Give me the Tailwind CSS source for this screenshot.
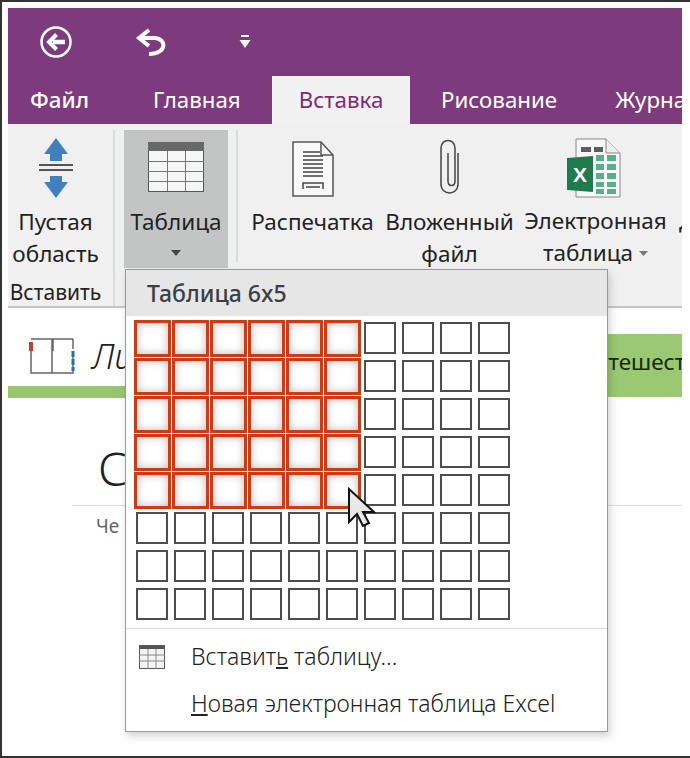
<!DOCTYPE html>
<html lang="ru">
<head>
  <meta charset="UTF-8" />
  <title>Таблица</title>
  <script src="https://cdn.jsdelivr.net/npm/@tailwindcss/browser@4"></script>
</head>
<body class="bg-white">
  <div class="relative w-[690px] h-[758px] overflow-hidden bg-white border-t-2 border-l-2 border-b-2 border-[#333] font-['Noto_Sans',sans-serif] text-[#222]">
    <div class="absolute left-[6px] top-[6px] w-[674px] h-[748px] overflow-hidden">

      <!-- title bar -->
      <div class="h-[68px] bg-[#7d3a7c] flex items-center">
        <div class="w-[96px] shrink-0 flex justify-center">
          <svg width="34" height="34" viewBox="0 0 34 34" fill="none">
            <circle cx="17" cy="17" r="14.5" stroke="#fff" stroke-width="2.5"/>
            <path d="M26 17H14" stroke="#fff" stroke-width="4.5"/>
            <path d="M17.500 9.500L10 17l7.500 7.500" stroke="#fff" stroke-width="4"/>
          </svg>
        </div>
        <div class="w-[93px] shrink-0 flex justify-center">
          <svg width="32" height="30" viewBox="0 0 32 30" fill="none">
            <path d="M14 3L4 11l10 8" stroke="#fff" stroke-width="4"/>
            <path d="M5 11h15c12 1 12 16-6 16" stroke="#fff" stroke-width="4"/>
          </svg>
        </div>
        <div class="w-[96px] shrink-0 flex justify-center">
          <svg width="14" height="16" viewBox="0 0 14 16">
            <path d="M3 1h8v2H3z" fill="#fff"/>
            <path d="M1.500 6h11L7 14z" fill="#fff"/>
          </svg>
        </div>
      </div>

      <!-- tabs -->
      <div class="h-[48px] bg-[#7d3a7c] flex items-end text-[22.3px] leading-[32px] text-white whitespace-nowrap">
        <div class="w-[264px] shrink-0 flex pb-[8px]">
          <span class="ml-[22px] w-[123px] shrink-0 font-medium">Файл</span>
          <span>Главная</span>
        </div>
        <div class="w-[138px] h-[48px] shrink-0 bg-[#f1f1f1] text-[#7d2a7c] flex items-end justify-center pb-[8px]">Вставка</div>
        <span class="ml-[31px] shrink-0 pb-[8px]">Рисование</span>
        <span class="ml-[58px] shrink-0 pb-[8px]">Журнал</span>
      </div>

      <!-- ribbon -->
      <div class="h-[184px] bg-[#f0f0f0] border-b-2 border-[#c6c6c6] flex text-[22.5px] leading-[32px] text-center whitespace-nowrap">
        <div class="w-[107px] h-[176px] mt-[6px] shrink-0 flex flex-col items-center pr-[10px] border-r-2 border-[#dcdcdc]">
          <svg class="mt-[7px] shrink-0" width="36" height="62" viewBox="0 0 36 62">
            <path d="M18 1L30 17h-6v7H12v-7H6z" fill="#3f80bd"/>
            <path d="M1 28h34M1 33h34" stroke="#555" stroke-width="2"/>
            <path d="M18 61L30 45h-6v-6H12v6H6z" fill="#3f80bd"/>
          </svg>
          <div class="mt-[7px]">Пустая</div>
          <div>область</div>
          <div class="mt-[8px] leading-[28px] text-[21px]">Вставить</div>
        </div>
        <div class="ml-[9px] mt-[6px] w-[104px] h-[138px] shrink-0 bg-[#c3c5c5] flex flex-col items-center">
          <svg class="mt-[12px] shrink-0" width="56" height="50" viewBox="0 0 56 50">
            <rect x="0.500" y="0.500" width="55" height="49" fill="#f6f6f6" stroke="#555"/>
            <rect x="0" y="0" width="56" height="9" fill="#696969"/>
            <path d="M0 19.500h56M0 29.500h56M0 39.500h56M19.500 9v40M37.500 9v40" stroke="#777"/>
          </svg>
          <div class="mt-[14px]">Таблица</div>
          <svg class="mt-[12px] shrink-0" width="10" height="6" viewBox="0 0 10 6"><path d="M0 0h10L5 6z" fill="#444"/></svg>
        </div>
        <div class="ml-[8px] mt-[6px] w-[2px] h-[132px] bg-[#dcdcdc] shrink-0"></div>
        <div class="ml-[12px] w-[125px] shrink-0 flex flex-col items-center">
          <svg class="mt-[17px] shrink-0" width="42" height="56" viewBox="0 0 42 56" fill="none">
            <path d="M1 1h28l12 13v41H1z" fill="#f8f8f8" stroke="#555" stroke-width="1.500"/>
            <path d="M29 1v13h12" stroke="#555" stroke-width="1.500"/>
            <path d="M11 11h17M11 15h20M11 19h20M11 23h20M11 27h20M11 31h20M11 35h20" stroke="#444" stroke-width="1.500"/>
            <path d="M11 48v-6h20v6M14 46h14" stroke="#444" stroke-width="1.500"/>
          </svg>
          <div class="mt-[9px]">Распечатка</div>
        </div>
        <div class="ml-[9px] w-[131px] shrink-0 flex flex-col items-center">
          <svg class="mt-[15px] shrink-0" width="22" height="56" viewBox="0 0 22 56" fill="none">
            <path d="M19 14v31c0 12-17 12-17 0V9c0-10 14-10 14 0v33c0 6-7 6-7 0V14" stroke="#444" stroke-width="1.500"/>
          </svg>
          <div class="mt-[11px]">Вложенный</div>
          <div>файл</div>
        </div>
        <div class="ml-[9px] w-[143px] shrink-0 flex flex-col items-center">
          <svg class="mt-[14px] shrink-0 mr-[4px]" width="54" height="60" viewBox="0 0 54 60">
            <path d="M9 1h30l14 14v44H9z" fill="#f8f8f8" stroke="#888"/>
            <path d="M39 1v14h14" fill="#eee" stroke="#888"/>
            <g fill="#5d5d5d"><rect x="14" y="9" width="10" height="5"/><rect x="27" y="9" width="9" height="5"/></g>
            <g fill="#57b08a">
              <rect x="29" y="17" width="8" height="6"/><rect x="40" y="17" width="9" height="6"/>
              <rect x="29" y="26" width="8" height="6"/><rect x="40" y="26" width="9" height="6"/>
              <rect x="29" y="35" width="8" height="6"/><rect x="40" y="35" width="9" height="6"/>
              <rect x="29" y="44" width="8" height="5"/><rect x="40" y="44" width="9" height="5"/>
              <rect x="29" y="51" width="8" height="5"/><rect x="40" y="51" width="9" height="5"/>
            </g>
            <path d="M0 20l26-2v36L0 52z" fill="#1f7a4c"/>
            <text x="13" y="44" text-anchor="middle" font-size="21" font-weight="700" fill="#fff" font-family="Liberation Sans, sans-serif">X</text>
          </svg>
          <div class="mt-[7px]">Электронная</div>
          <div class="flex items-center gap-[6px]">таблица<svg width="9" height="5" viewBox="0 0 9 5"><path d="M0 0h9L4.500 5z" fill="#777"/></svg></div>
        </div>
        <div class="ml-[12px] pt-[81px] shrink-0">Д</div>
      </div>

      <!-- page behind the menu -->
      <div class="h-[90px] flex">
        <div class="w-[599px] shrink-0 border-b-[12px] border-[#97c66f] flex items-start">
          <svg class="ml-[20px] mt-[30px] shrink-0" width="48" height="36" viewBox="0 0 48 36" fill="none">
            <path d="M3 11v24h21V1H3M24 35h21V13M45 1H25v12M45 1v10" stroke="#666" stroke-width="1.500"/>
            <rect x="1" y="4" width="4" height="9" fill="#d03a2f"/>
            <path d="M45 13v20" stroke="#2f6f9f" stroke-width="3" stroke-dasharray="6 2"/>
          </svg>
          <span class="ml-[16px] mt-[26px] text-[34px] italic font-light leading-[44px]">Ли</span>
        </div>
        <div class="w-[75px] h-[63px] mt-[26px] shrink-0 bg-[#9bc873] text-[22.5px] text-[#132b0c] leading-[56px] indent-[-10px] whitespace-nowrap overflow-hidden">утешествия</div>
      </div>
      <div class="pl-[90px] pt-[41px] text-[46px] leading-[58px] font-light">С</div>
      <div class="ml-[64px] mt-[8px] border-t border-[#ddd] pl-[24px] pt-[6px] text-[19px] leading-[28px] text-[#666]">Че</div>
    </div>

    <!-- table dropdown -->
    <div class="absolute left-[123px] top-[267px] w-[483px] h-[463px] bg-white border border-[#9a9a9a] shadow-[2px_4px_8px_rgba(0,0,0,0.18)] flex flex-col">
      <div class="h-[46px] shrink-0 bg-[#e6e6e6] pl-[21px] text-[23px] font-medium leading-[46px] text-[#3a3f44]">Таблица 6x5</div>
      <div id="grid" class="ml-[7px] mt-[3px] grid grid-cols-[repeat(10,38px)] auto-rows-[38px] items-center justify-items-center"></div>
      <div class="mt-[5px] border-t border-[#ddd] flex items-center h-[56px] shrink-0">
        <svg class="ml-[13px] shrink-0" width="26" height="24" viewBox="0 0 26 24" fill="none">
          <rect x="0.500" y="0.500" width="25" height="23" fill="#f4f4f4" stroke="#555"/>
          <rect x="0" y="0" width="26" height="4" fill="#555"/>
          <path d="M0 10h26M0 16h26M9 4v20M17 4v20" stroke="#888"/>
        </svg>
        <span class="ml-[26px] text-[23px] font-light">Вставит<u>ь</u> таблицу...</span>
      </div>
      <div class="pl-[65px] text-[23px] font-light leading-[38px] whitespace-nowrap"><u>Н</u>овая электронная таблица Excel</div>
    </div>

    <!-- mouse pointer -->
    <svg class="absolute left-[344px] top-[484px]" width="30" height="42" viewBox="0 0 30 42">
      <path d="M3 3v33l8-8 6 12 6-3-6-11h11z" fill="#e8e8e8" stroke="#111" stroke-width="2"/>
    </svg>
  </div>

  <script>
    const grid = document.getElementById('grid');
    for (let row = 0; row < 8; row++) {
      for (let col = 0; col < 10; col++) {
        const cell = document.createElement('div');
        if (row < 5 && col < 6) {
          cell.className = 'w-[37px] h-[37px] border-[3px] border-[#cf3a12] bg-white shadow-[inset_0_0_8px_#b8b8b8]';
        } else {
          cell.className = 'w-[32px] h-[32px] border-2 border-[#4d4d4d] bg-white';
        }
        grid.appendChild(cell);
      }
    }
  </script>
</body>
</html>
